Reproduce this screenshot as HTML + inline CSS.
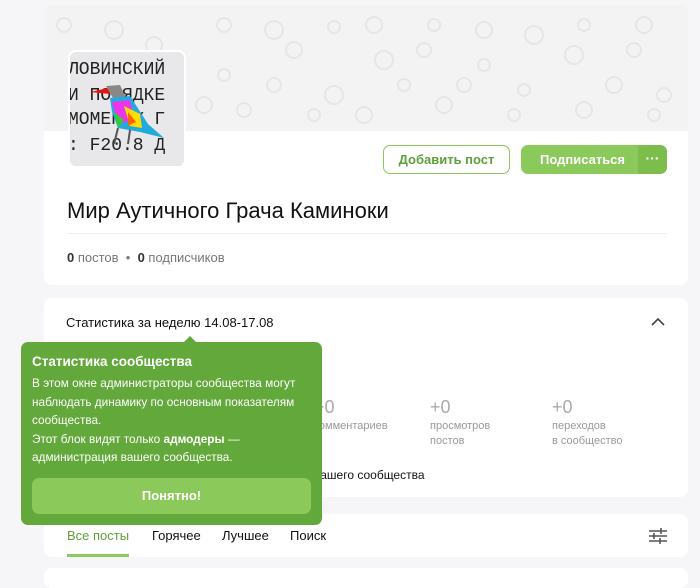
<!DOCTYPE html>
<html><head><meta charset="utf-8"><style>
*{box-sizing:border-box;margin:0;padding:0}
body{width:700px;height:576px;background:#f6f6f8;font-family:"Liberation Sans",sans-serif;position:relative;overflow:hidden;color:#111}
.card{position:absolute;left:44px;width:644px;background:#fff;border-radius:8px}
.banner{position:absolute;left:0;top:0;width:644px;height:126px;background:#f3f3f4;border-radius:8px 8px 0 0;overflow:hidden}
.av{position:absolute;left:24px;top:45px;width:118px;height:118px;border-radius:8px;overflow:hidden;background:#e8e8ea;border:2px solid #fff}
.av div{position:absolute;left:-2px;font-family:"Liberation Mono",monospace;font-size:18px;color:#222;white-space:nowrap}
.btn{position:absolute;top:140px;height:29px;border-radius:7px;font-size:13px;font-weight:bold;display:flex;align-items:center;justify-content:center}
.t{position:absolute;font-size:13px;color:#111}
.num{position:absolute;font-size:18px;color:#aaa;top:99px}
.lab{position:absolute;font-size:11px;color:#999;line-height:15px;top:121px}
</style></head><body>
<div class="card" style="top:5px;height:280px">
 <div class="banner">
  <svg width="644" height="126"><g fill="none" stroke="#e6e6e8" stroke-width="2">
   <circle cx="20" cy="20" r="7"/><circle cx="70" cy="25" r="9"/><circle cx="110" cy="40" r="8"/><circle cx="180" cy="20" r="7"/><circle cx="230" cy="25" r="9"/><circle cx="290" cy="22" r="6"/><circle cx="330" cy="20" r="8"/><circle cx="390" cy="20" r="6"/><circle cx="440" cy="25" r="8"/><circle cx="490" cy="30" r="9"/><circle cx="540" cy="20" r="6"/><circle cx="600" cy="20" r="8"/><circle cx="250" cy="45" r="8"/><circle cx="340" cy="55" r="9"/><circle cx="380" cy="45" r="7"/><circle cx="440" cy="60" r="6"/><circle cx="530" cy="50" r="9"/><circle cx="590" cy="45" r="7"/><circle cx="230" cy="80" r="7"/><circle cx="180" cy="70" r="6"/><circle cx="290" cy="90" r="9"/><circle cx="360" cy="80" r="6"/><circle cx="420" cy="80" r="7"/><circle cx="480" cy="85" r="6"/><circle cx="570" cy="80" r="8"/><circle cx="620" cy="90" r="7"/><circle cx="160" cy="100" r="8"/><circle cx="200" cy="105" r="7"/><circle cx="270" cy="110" r="6"/><circle cx="320" cy="110" r="8"/><circle cx="400" cy="100" r="8"/><circle cx="470" cy="110" r="6"/><circle cx="540" cy="105" r="8"/><circle cx="610" cy="110" r="6"/>
  </g></svg>
 </div>
 <div class="av">
  <div style="top:8px">ЛОВИНСКИЙ</div>
  <div style="top:34px">И ПОРЯДКЕ</div>
  <div style="top:58px">МОМЕНТУ Г</div>
  <div style="top:84px">: F20.8 Д</div>
  <svg style="position:absolute;left:18px;top:30px" width="80" height="66"><polygon points="2,10 20,6 22,12" fill="#e11"/><polygon points="18,4 32,3 38,16 26,18" fill="#888"/><polygon points="22,16 42,14 60,42 76,56 52,50 30,46 24,30" fill="#2ad"/><polygon points="24,20 42,18 46,38 30,42" fill="#e3e"/><polygon points="36,24 52,32 54,46 42,44" fill="#fd0"/><polygon points="26,30 36,38 30,46" fill="#3c3"/><polygon points="40,30 48,40 40,44" fill="#f60"/><line x1="30" y1="46" x2="26" y2="62" stroke="#555" stroke-width="2"/><line x1="42" y1="48" x2="40" y2="62" stroke="#555" stroke-width="2"/></svg>
 </div>
 <div class="btn" style="left:339px;width:127px;border:1px solid #8bc95a;color:#5ea13a">Добавить пост</div>
 <div class="btn" style="left:477px;width:146px;background:#8bc95a;color:#fff;justify-content:flex-start;padding-left:19px">Подписаться<span style="position:absolute;right:0;top:0;width:29px;height:29px;background:#7dbd4c;border-radius:0 7px 7px 0;text-align:center;line-height:26px;font-size:14px">···</span></div>
 <div style="position:absolute;left:23px;top:193px;font-size:22px;color:#111">Мир Аутичного Грача Каминоки</div>
 <div style="position:absolute;left:23px;right:21px;top:228px;border-top:1px solid #eee"></div>
 <div style="position:absolute;left:23px;top:245px;font-size:13px;color:#777"><b style="color:#333">0</b> постов &nbsp;•&nbsp; <b style="color:#333">0</b> подписчиков</div>
</div>
<div class="card" style="top:298px;height:199px">
 <div class="t" style="left:22px;top:17px">Статистика за неделю 14.08-17.08</div>
 <svg style="position:absolute;left:607px;top:19px" width="14" height="9"><path d="M1 8L7 2L13 8" fill="none" stroke="#444" stroke-width="1.6"/></svg>
 <div class="num" style="left:270px">+0</div><div class="lab" style="left:270px">комментариев</div>
 <div class="num" style="left:386px">+0</div><div class="lab" style="left:386px">просмотров<br>постов</div>
 <div class="num" style="left:508px">+0</div><div class="lab" style="left:508px">переходов<br>в сообщество</div>
 <div class="t" style="left:270px;top:170px;font-size:12px">вашего сообщества</div>
</div>
<div class="card" style="top:514px;height:43px">
 <div class="t" style="left:23px;top:14px;color:#5ea13a">Все посты</div>
 <div style="position:absolute;left:23px;top:40px;width:62px;height:3px;background:#8bc95a"></div>
 <div class="t" style="left:108px;top:14px">Горячее</div>
 <div class="t" style="left:178px;top:14px">Лучшее</div>
 <div class="t" style="left:246px;top:14px">Поиск</div>
 <svg style="position:absolute;left:605px;top:14px" width="18" height="16" stroke="#555" stroke-width="1.6"><line x1="0" y1="3" x2="18" y2="3"/><line x1="0" y1="8" x2="18" y2="8"/><line x1="0" y1="13" x2="18" y2="13"/><line x1="12" y1="0" x2="12" y2="6"/><line x1="5" y1="5" x2="5" y2="11"/><line x1="11" y1="10" x2="11" y2="16"/></svg>
</div>
<div class="card" style="top:568px;height:20px"></div>
<div style="position:absolute;left:21px;top:342px;width:301px;height:183px;background:#62a83a;border-radius:7px;color:#fff;padding:12px 11px">
 <div style="position:absolute;left:163px;top:-6px;width:0;height:0;border-left:6px solid transparent;border-right:6px solid transparent;border-bottom:6px solid #62a83a"></div>
 <div style="font-size:13.5px;font-weight:bold;margin-bottom:5px">Статистика сообщества</div>
 <div style="font-size:11.8px;line-height:18.5px">В этом окне администраторы сообщества могут наблюдать динамику по основным показателям сообщества.<br>Этот блок видят только <b>адмодеры</b> — администрация вашего сообщества.</div>
 <div style="position:absolute;left:11px;top:136px;width:279px;height:36px;background:#8bc95a;border-radius:7px;text-align:center;line-height:36px;font-size:13px;font-weight:bold">Понятно!</div>
</div>
</body></html>
